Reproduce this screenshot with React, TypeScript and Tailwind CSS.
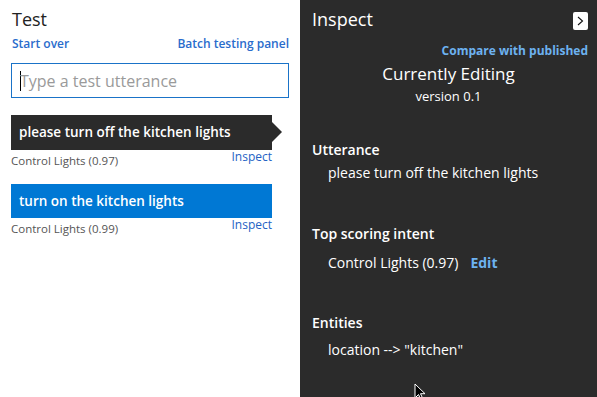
const FONT = "font-['Segoe_UI','Open_Sans','Noto_Sans',sans-serif]";

type Result = { text: string; intent: string; active?: boolean };

const RESULTS: Result[] = [
  { text: "please turn off the kitchen lights", intent: "Control Lights (0.97)", active: true },
  { text: "turn on the kitchen lights", intent: "Control Lights (0.99)" },
];

function ResultRow({ item }: { item: Result }) {
  return (
    <div className="mb-[15px]">
      <div className="relative w-[261px]">
        <div
          className={
            item.active
              ? "flex h-[35px] items-center bg-[#2b2b2b] px-2 text-[13.5px] font-semibold text-white"
              : "flex h-[34px] items-center bg-[#0078d4] px-2 text-[13.5px] font-semibold text-white"
          }
        >
          {item.text}
        </div>
        {item.active ? (
          <div className="absolute right-[-10px] top-[7px] h-0 w-0 border-y-[10px] border-l-[10px] border-y-transparent border-l-[#2b2b2b]" />
        ) : null}
      </div>
      <div className="flex w-[261px] items-start justify-between">
        <span className="mt-[2px] text-[11.5px] text-[#555]">{item.intent}</span>
        <span className="mt-[-2px] text-[12px] text-[#2462c4]">Inspect</span>
      </div>
    </div>
  );
}

function TestPanel() {
  return (
    <div className="w-[300px] bg-white px-[11px] pt-[7px]">
      <div className="ml-px text-[18px] leading-[24px] text-[#222]">Test</div>
      <div className="mt-[4px] flex justify-between text-[12px] font-semibold text-[#2a6ccc]">
        <span className="ml-px">Start over</span>
        <span>Batch testing panel</span>
      </div>
      <div className="mt-[10px] flex h-[35px] w-[278px] items-center border border-[#1a73c8] px-[8px]">
        <span className="mr-[-1px] h-[20px] w-px bg-black" />
        <span className="text-[16px] text-[#9a9a9a]">Type a test utterance</span>
      </div>
      <div className="mt-[17px]">
        {RESULTS.map((r) => (
          <ResultRow key={r.text} item={r} />
        ))}
      </div>
    </div>
  );
}

function InspectPanel() {
  return (
    <div className="relative flex-1 bg-[#2b2b2b] px-[12px] pt-[7px] text-white">
      <div className="flex items-start justify-between">
        <span className="text-[18px] leading-[24px]">Inspect</span>
        <button className="mr-[-3px] mt-[5px] flex h-[18px] w-[15px] items-center justify-center rounded-[2px] bg-white">
          <svg width="7" height="10" viewBox="0 0 7 10" fill="none">
            <path d="M1 1l4.5 4L1 9" stroke="#111" strokeWidth="1.1" />
          </svg>
        </button>
      </div>
      <div className="mr-[-3px] mt-[11px] text-right text-[12px] font-bold text-[#6db2f0]">Compare with published</div>
      <div className="mt-[2px] text-center text-[17px] leading-[24px]">Currently Editing</div>
      <div className="mt-px text-center text-[13px]">version 0.1</div>

      <div className="mt-[32px] text-[14px] font-semibold">Utterance</div>
      <div className="mt-[2px] pl-[16px] text-[14px]">please turn off the kitchen lights</div>

      <div className="mt-[40px] text-[14px] font-semibold">Top scoring intent</div>
      <div className="mt-[8px] flex gap-[12px] pl-[16px] text-[14px]">
        <span>Control Lights (0.97)</span>
        <span className="font-bold text-[#6db2f0]">Edit</span>
      </div>

      <div className="mt-[39px] text-[14px] font-semibold">Entities</div>
      <div className="mt-[6px] pl-[16px] text-[14px]">location --&gt; "kitchen"</div>

      <svg className="absolute left-[114px] top-[383px]" width="12" height="18" viewBox="0 0 12 18">
        <path d="M1 1v14l3.5-3.5 2.5 5.5 2-1-2.5-5.3H11z" fill="#000" stroke="#fff" strokeWidth="1" />
      </svg>
    </div>
  );
}

export default function App() {
  return (
    <div className={`flex h-[397px] w-[597px] overflow-hidden ${FONT}`}>
      <TestPanel />
      <InspectPanel />
    </div>
  );
}
